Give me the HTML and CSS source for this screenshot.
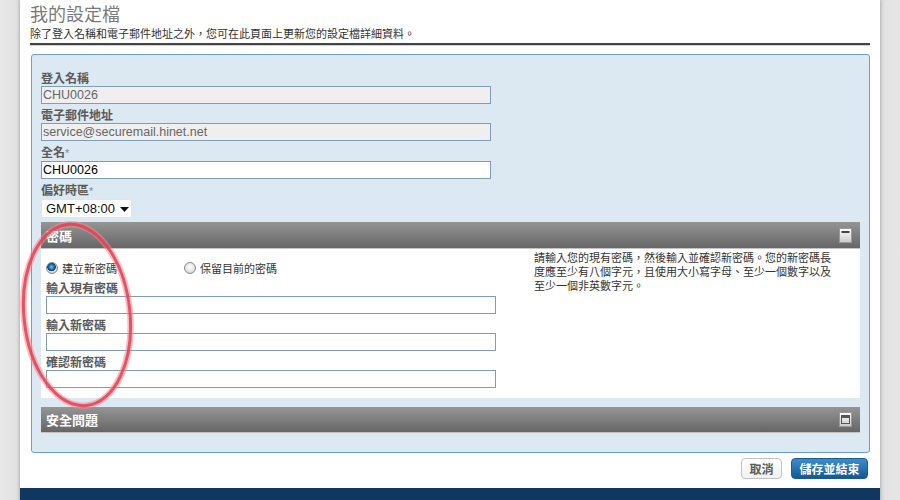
FILE: index.html
```html
<!DOCTYPE html>
<html lang="zh-Hant">
<head>
<meta charset="utf-8">
<title>我的設定檔</title>
<link rel="stylesheet" href="styles.css">
</head>
<body>
<div class="page">
  <div class="content">
    <h1 class="title">我的設定檔</h1>
    <p class="subtitle">除了登入名稱和電子郵件地址之外，您可在此頁面上更新您的設定檔詳細資料。</p>
    <div class="rule"></div>

    <div class="panel">
      <label class="lbl first">登入名稱</label>
      <input class="txt disabled" type="text" value="CHU0026" disabled>
      <label class="lbl">電子郵件地址</label>
      <input class="txt disabled" type="text" value="service@securemail.hinet.net" disabled>
      <label class="lbl">全名<span class="req">*</span></label>
      <input class="txt" type="text" value="CHU0026">
      <label class="lbl">偏好時區<span class="req">*</span></label>
      <div class="select"><span>GMT+08:00</span><svg class="caret" width="9" height="5" viewBox="0 0 9 5"><path d="M0 0H9L4.5 5Z" fill="#111"/></svg></div>

      <div class="secbar first-bar">
        <span>密碼</span>
        <svg class="toggle" width="13" height="15" viewBox="0 0 13 15">
          <defs><linearGradient id="g1" x1="0" y1="0" x2="0" y2="1"><stop offset="0" stop-color="#ffffff"/><stop offset="1" stop-color="#c9c9c9"/></linearGradient></defs>
          <rect x="0.5" y="0.5" width="12" height="14" fill="url(#g1)" stroke="#9a9a9a"/>
          <rect x="2.5" y="3" width="8" height="2" fill="#444"/>
        </svg>
      </div>
      <div class="secbody">
        <div class="leftcol">
          <div class="radios">
            <label class="radio"><input type="radio" name="pw" checked><span>建立新密碼</span></label>
            <label class="radio second"><input type="radio" name="pw"><span>保留目前的密碼</span></label>
          </div>
          <label class="lbl pw">輸入現有密碼</label>
          <input class="txt" type="password">
          <label class="lbl">輸入新密碼</label>
          <input class="txt" type="password">
          <label class="lbl">確認新密碼</label>
          <input class="txt" type="password">
        </div>
        <p class="help">請輸入您的現有密碼，然後輸入並確認新密碼。您的新密碼長度應至少有八個字元，且使用大小寫字母、至少一個數字以及至少一個非英數字元。</p>
      </div>

      <div class="secbar second-bar">
        <span>安全問題</span>
        <svg class="toggle" width="13" height="15" viewBox="0 0 13 15">
          <defs><linearGradient id="g2" x1="0" y1="0" x2="0" y2="1"><stop offset="0" stop-color="#ffffff"/><stop offset="1" stop-color="#c9c9c9"/></linearGradient></defs>
          <rect x="0.5" y="0.5" width="12" height="14" fill="url(#g2)" stroke="#9a9a9a"/>
          <rect x="2.5" y="3.5" width="8" height="8" fill="none" stroke="#555"/>
          <rect x="3" y="4" width="7" height="2" fill="#555"/>
        </svg>
      </div>
    </div>

    <div class="actions">
      <button class="btn cancel" type="button">取消</button>
      <button class="btn save" type="button">儲存並結束</button>
    </div>
  </div>
  <div class="footer"></div>

  <svg class="circle" width="140" height="230" viewBox="0 0 140 230">
    <ellipse cx="57" cy="115" rx="53" ry="91" transform="rotate(-6 57 115)" fill="none" stroke="#f08a94" stroke-width="6.5" opacity="0.55"/>
    <ellipse cx="57" cy="115" rx="53" ry="91" transform="rotate(-6 57 115)" fill="none" stroke="#e4404f" stroke-width="3" opacity="0.85"/>
  </svg>
</div>
</body>
</html>
```

FILE: styles.css
```css
html, body {
  margin: 0;
  padding: 0;
}
body {
  background: linear-gradient(to right, #e8e8e8 0, #e2e2e2 16px, #cfcfcf 20px, #cfcfcf 880px, #e3e3e3 885px, #e6e6e6 900px);
  font-family: "Noto Sans CJK TC", "Liberation Sans", sans-serif;
  color: #333;
}
.page {
  position: relative;
  margin: 0 20px;
  width: 860px;
  height: 500px;
  background: #fff;
  display: flex;
  flex-direction: column;
  box-shadow: 0 0 3px rgba(0, 0, 0, 0.2);
}
.content {
  padding: 0 10px;
  flex: 1;
}
.title {
  margin: 0;
  font-size: 18px;
  line-height: 26px;
  font-weight: normal;
  color: #7a7a7a;
}
.subtitle {
  margin: 0;
  font-size: 11px;
  line-height: 14px;
  color: #333;
}
.rule {
  margin-top: 3px;
  height: 2px;
  background: #444;
  border-bottom: 1px solid #cfcfcf;
}
.panel {
  margin: 8px 0 0 1px;
  border: 1px solid #6b9fd3;
  border-radius: 3px;
  background: #dce9f3;
  padding: 15px 9px 19px 9px;
}
.lbl {
  display: block;
  margin-top: 3px;
  font-size: 12px;
  line-height: 16px;
  font-weight: bold;
  color: #5a5a5a;
}
.lbl.first {
  margin-top: 0;
}
.req {
  color: #888;
  font-family: "Liberation Sans", sans-serif;
  font-weight: normal;
  font-size: 11px;
}
.txt {
  display: block;
  box-sizing: border-box;
  width: 450px;
  height: 18px;
  margin: 0;
  padding: 0 1px;
  border: 1px solid #7f9db9;
  background: #fff;
  font-family: "Liberation Sans", sans-serif;
  font-size: 12.5px;
  color: #000;
  outline: none;
}
.txt.disabled {
  background: #efefef;
  color: #666;
}
.select {
  box-sizing: border-box;
  width: 91px;
  height: 19px;
  background: #fff;
  border: 1px solid #e4e4e4;
  border-radius: 2px;
  display: flex;
  align-items: center;
  padding-left: 4px;
  font-family: "Liberation Sans", sans-serif;
  font-size: 13px;
  color: #111;
}
.select .caret {
  margin-left: 5px;
  margin-top: 2px;
}
.secbar {
  box-sizing: border-box;
  height: 27px;
  background: linear-gradient(to bottom, #959595, #666666);
  border-bottom: 1px solid #c4c4c4;
  display: flex;
  align-items: center;
  justify-content: space-between;
  padding: 0 8px 0 5px;
  color: #fff;
  font-weight: bold;
  font-size: 13px;
}
.first-bar {
  margin-top: 4px;
}
.second-bar {
  margin-top: 9px;
  height: 26px;
}
.toggle {
  display: block;
}
.secbody {
  background: #fff;
  display: flex;
  align-items: flex-start;
  padding: 12px 5px 10px 5px;
}
.leftcol {
  width: 450px;
}
.radios {
  display: flex;
  height: 14px;
  align-items: center;
}
.radio {
  display: flex;
  align-items: center;
  width: 138px;
  font-size: 11px;
  color: #333;
}
.radio input {
  appearance: none;
  -webkit-appearance: none;
  box-sizing: border-box;
  width: 12px;
  height: 12px;
  margin: 0 4px 0 0;
  border-radius: 50%;
  border: 1px solid #8a8a8a;
  background: radial-gradient(circle at 50% 40%, #ffffff 0, #d8d8d8 80%);
}
.radio input:checked {
  background: radial-gradient(circle at 45% 40%, #7fc6f0 0, #1673b8 2.5px, #0c3f6b 4px, #e6e6e6 4.6px, #cfcfcf 6px);
}
.lbl.pw {
  margin-top: 5px;
}
.help {
  margin: -11px 0 0 38px;
  width: 300px;
  font-size: 11px;
  line-height: 14px;
  color: #333;
}
.actions {
  display: flex;
  justify-content: flex-end;
  gap: 9px;
  margin: 5px 2px 0 0;
}
.btn {
  box-sizing: border-box;
  height: 21px;
  border-radius: 4px;
  font-family: "Noto Sans CJK TC", sans-serif;
  font-weight: bold;
  font-size: 12px;
  padding: 0;
  line-height: 19px;
}
.cancel {
  width: 41px;
  background: linear-gradient(#ffffff, #f1f1f1);
  border: 1px solid #c2c2c2;
  color: #5a5a5a;
}
.save {
  width: 77px;
  background: linear-gradient(#3b8ccc, #135a93);
  border: 1px solid #1b5d92;
  color: #fff;
}
.footer {
  height: 12px;
  background: #10375f;
}
.circle {
  position: absolute;
  left: 0;
  top: 200px;
  pointer-events: none;
}
```
